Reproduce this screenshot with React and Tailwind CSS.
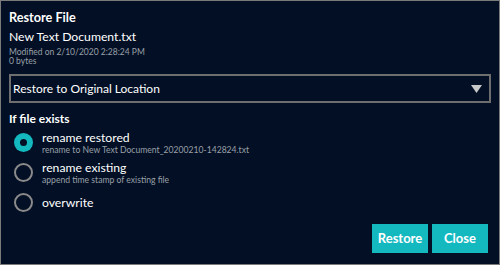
import { useState } from "react";

const options = [
  { id: "restored", label: "rename restored", hint: "rename to New Text Document_20200210-142824.txt" },
  { id: "existing", label: "rename existing", hint: "append time stamp of existing file" },
  { id: "overwrite", label: "overwrite" },
];

function Radio({ checked }) {
  return checked ? (
    <span className="flex h-[19px] w-[19px] shrink-0 items-center justify-center rounded-full bg-[#14b8bf]">
      <span className="h-[7px] w-[7px] rounded-full bg-[#020f24]" />
    </span>
  ) : (
    <span className="h-[19px] w-[19px] shrink-0 rounded-full border-2 border-[#8a8a8a]" />
  );
}

export default function App() {
  const [choice, setChoice] = useState("restored");

  return (
    <div
      className="flex h-[265px] w-[500px] flex-col border border-[#7a7a7a] bg-[#020f24] px-[8px] pt-[7px] text-white"
      style={{ fontFamily: 'Lato, "Open Sans", sans-serif' }}
    >
      <h1 className="text-[12.7px] font-bold leading-[18px]">Restore File</h1>
      <div className="mt-[2px] text-[12.2px] leading-[18px]">New Text Document.txt</div>
      <div className="mt-[1px] text-[8.5px] leading-[10px] text-[#9aa0a8]">Modified on 2/10/2020 2:28:24 PM</div>
      <div className="text-[8.5px] leading-[9px] text-[#9aa0a8]">0 bytes</div>

      <button className="mt-[8px] flex h-[29px] w-full items-center justify-between border-2 border-[#6e6e6e] pl-[2px] pr-[7px] text-left text-[12px]">
        <span>Restore to Original Location</span>
        <svg width="11" height="8" viewBox="0 0 11 8">
          <path d="M0 0h11L5.5 8z" fill="#c8c8c8" />
        </svg>
      </button>

      <h2 className="mt-[8px] text-[12px] font-bold leading-[16px]">If file exists</h2>

      <div className="mt-[6px] flex flex-col gap-[11px] pl-[5px]">
        {options.map((o) => (
          <label key={o.id} className="flex h-[19px] cursor-pointer items-center gap-[9px]" onClick={() => setChoice(o.id)}>
            <Radio checked={choice === o.id} />
            <span className="flex flex-col">
              <span className="text-[12.2px] leading-[15px]">{o.label}</span>
              {o.hint && <span className="text-[8.6px] leading-[10px] text-[#9aa0a8]">{o.hint}</span>}
            </span>
          </label>
        ))}
      </div>

      <div className="mt-auto mb-[11px] flex justify-end gap-[4px] pr-[3px]">
        <button className="h-[29px] w-[56px] bg-[#14b8bf] text-[13px] font-bold">Restore</button>
        <button className="h-[29px] w-[56px] bg-[#14b8bf] text-[13px] font-bold">Close</button>
      </div>
    </div>
  );
}
